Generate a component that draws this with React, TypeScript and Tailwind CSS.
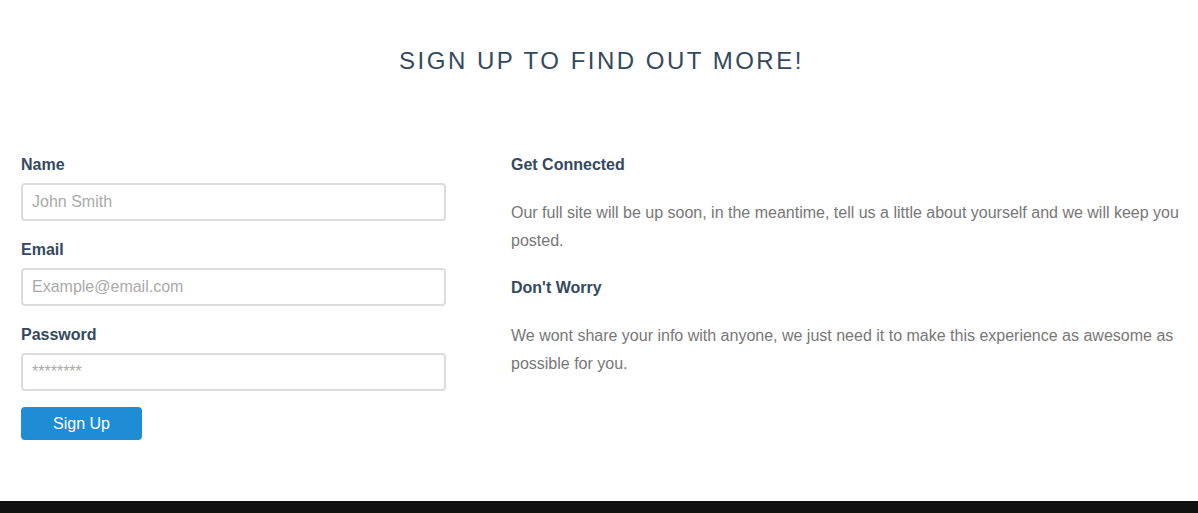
export default function App() {
  const font = { fontFamily: '"Liberation Sans", Arial, Helvetica, sans-serif' };
  const inputCls =
    "mt-[8px] h-[38px] w-full rounded-[4px] border-2 border-[#dcdcdc] px-[9px] text-[16px] text-[#555] placeholder:text-[#aaa] outline-none";
  return (
    <div className="min-h-[513px] bg-white flex flex-col" style={font}>
      <div className="flex-1">
        <h1 className="pt-[46px] pl-[5px] text-center text-[24px] leading-[29px] tracking-[2.5px] font-normal text-[#34495e]">
          SIGN UP TO FIND OUT MORE!
        </h1>
        <div className="flex pl-[21px] pr-[10px] pt-[79px]">
          <form className="w-[425px] shrink-0 flex flex-col" onSubmit={(e) => e.preventDefault()}>
            <label className="pt-[1px] text-[16px] leading-[20px] font-bold text-[#34495e]">Name</label>
            <input type="text" placeholder="John Smith" className={inputCls} />
            <label className="mt-[18px] pt-[1px] text-[16px] leading-[20px] font-bold text-[#34495e]">Email</label>
            <input type="email" placeholder="Example@email.com" className={inputCls} />
            <label className="mt-[18px] pt-[1px] text-[16px] leading-[20px] font-bold text-[#34495e]">Password</label>
            <input type="text" placeholder="********" className={inputCls} />
            <button
              type="submit"
              className="mt-[16px] h-[33px] w-[121px] rounded-[4px] bg-[#1f8dd6] text-[16px] text-white"
            >
              Sign Up
            </button>
          </form>
          <div className="ml-[65px] flex-1 pt-[1px]">
            <h3 className="text-[16px] leading-[20px] font-bold text-[#34495e]">Get Connected</h3>
            <p className="mt-[24px] text-[16px] leading-[28px] text-[#777]">
              Our full site will be up soon, in the meantime, tell us a little about yourself and we will keep you posted.
            </p>
            <h3 className="mt-[23px] text-[16px] leading-[20px] font-bold text-[#34495e]">Don't Worry</h3>
            <p className="mt-[24px] text-[16px] leading-[28px] text-[#777]">
              We wont share your info with anyone, we just need it to make this experience as awesome as possible for you.
            </p>
          </div>
        </div>
      </div>
      <div className="h-[12px] bg-[#111111]" />
    </div>
  );
}
